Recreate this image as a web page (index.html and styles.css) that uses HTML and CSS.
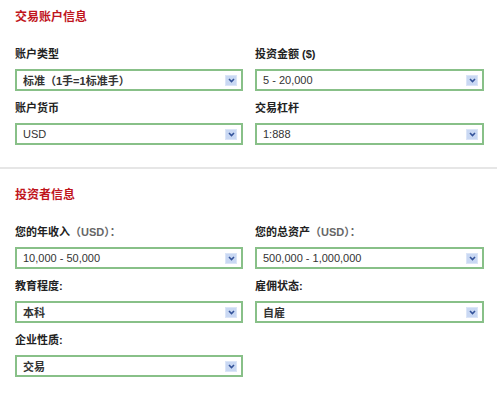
FILE: index.html
```html
<!DOCTYPE html>
<html lang="zh-CN">
<head>
<meta charset="utf-8">
<title>交易账户信息</title>
<link rel="stylesheet" href="styles.css">
</head>
<body>
<section class="section first">
  <h2 class="title">交易账户信息</h2>
  <div class="grid">
    <div class="field">
      <div class="label">账户类型</div>
      <div class="select"><span class="value cjk">标准（1手=1标准手）</span><span class="arrow"><svg width="7" height="5" viewBox="0 0 7 5"><path d="M1 1 L3.5 3.5 L6 1" fill="none" stroke="#34539a" stroke-width="1.6"/></svg></span></div>
    </div>
    <div class="field">
      <div class="label">投资金额 ($)</div>
      <div class="select"><span class="value">5 - 20,000</span><span class="arrow"><svg width="7" height="5" viewBox="0 0 7 5"><path d="M1 1 L3.5 3.5 L6 1" fill="none" stroke="#34539a" stroke-width="1.6"/></svg></span></div>
    </div>
    <div class="field">
      <div class="label">账户货币</div>
      <div class="select"><span class="value">USD</span><span class="arrow"><svg width="7" height="5" viewBox="0 0 7 5"><path d="M1 1 L3.5 3.5 L6 1" fill="none" stroke="#34539a" stroke-width="1.6"/></svg></span></div>
    </div>
    <div class="field">
      <div class="label">交易杠杆</div>
      <div class="select"><span class="value">1:888</span><span class="arrow"><svg width="7" height="5" viewBox="0 0 7 5"><path d="M1 1 L3.5 3.5 L6 1" fill="none" stroke="#34539a" stroke-width="1.6"/></svg></span></div>
    </div>
  </div>
</section>
<hr class="divider">
<section class="section second">
  <h2 class="title">投资者信息</h2>
  <div class="grid">
    <div class="field">
      <div class="label">您的年收入<span class="muted">（USD）：</span></div>
      <div class="select"><span class="value">10,000 - 50,000</span><span class="arrow"><svg width="7" height="5" viewBox="0 0 7 5"><path d="M1 1 L3.5 3.5 L6 1" fill="none" stroke="#34539a" stroke-width="1.6"/></svg></span></div>
    </div>
    <div class="field">
      <div class="label">您的总资产<span class="muted">（USD）：</span></div>
      <div class="select"><span class="value">500,000 - 1,000,000</span><span class="arrow"><svg width="7" height="5" viewBox="0 0 7 5"><path d="M1 1 L3.5 3.5 L6 1" fill="none" stroke="#34539a" stroke-width="1.6"/></svg></span></div>
    </div>
    <div class="field">
      <div class="label">教育程度:</div>
      <div class="select"><span class="value cjk">本科</span><span class="arrow"><svg width="7" height="5" viewBox="0 0 7 5"><path d="M1 1 L3.5 3.5 L6 1" fill="none" stroke="#34539a" stroke-width="1.6"/></svg></span></div>
    </div>
    <div class="field">
      <div class="label">雇佣状态:</div>
      <div class="select"><span class="value cjk">自雇</span><span class="arrow"><svg width="7" height="5" viewBox="0 0 7 5"><path d="M1 1 L3.5 3.5 L6 1" fill="none" stroke="#34539a" stroke-width="1.6"/></svg></span></div>
    </div>
    <div class="field">
      <div class="label">企业性质:</div>
      <div class="select"><span class="value cjk">交易</span><span class="arrow"><svg width="7" height="5" viewBox="0 0 7 5"><path d="M1 1 L3.5 3.5 L6 1" fill="none" stroke="#34539a" stroke-width="1.6"/></svg></span></div>
    </div>
  </div>
</section>
</body>
</html>
```
FILE: styles.css
```css
html, body {
  margin: 0;
  padding: 0;
  background: #ffffff;
}
body {
  font-family: "Liberation Sans", "Noto Sans CJK SC", Arial, sans-serif;
  font-size: 11px;
  color: #333333;
}
.section {
  padding: 0 13px 0 15px;
}
.section.first {
  padding-top: 8px;
  padding-bottom: 22px;
}
.section.second {
  padding-top: 17px;
}
.title {
  margin: 0 0 20px 0;
  font-size: 12px;
  line-height: 18px;
  font-weight: bold;
  color: #c0141c;
}
.grid {
  display: grid;
  grid-template-columns: 228px 229px;
  column-gap: 12px;
  row-gap: 9px;
}
.label {
  font-size: 11px;
  line-height: 16px;
  font-weight: bold;
  color: #222222;
  margin-bottom: 7px;
}
.muted {
  color: #666666;
  font-weight: bold;
}
.select {
  box-sizing: border-box;
  height: 22px;
  border: 2px solid #88c088;
  display: flex;
  align-items: center;
  justify-content: space-between;
  padding: 0 4px 0 6px;
  background: #ffffff;
}
.value {
  font-size: 11px;
  color: #333333;
  white-space: nowrap;
}
.value.cjk {
  font-weight: bold;
}
.arrow {
  width: 12px;
  height: 11px;
  background: #c9d8f3;
  border: 1px solid #dbe5f7;
  box-sizing: border-box;
  display: flex;
  align-items: center;
  justify-content: center;
}
.arrow svg {
  display: block;
}
.divider {
  margin: 0;
  border: 0;
  height: 2px;
  background: #e6e6e6;
}
```
